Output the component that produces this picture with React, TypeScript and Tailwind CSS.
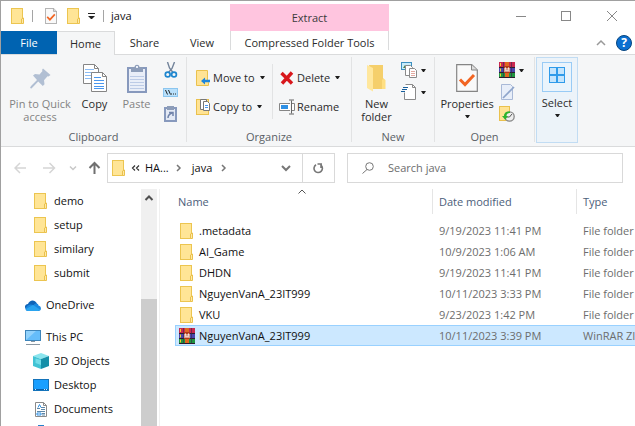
import type { ReactNode } from "react";

function Folder() {
  return (
    <svg width="14" height="16" viewBox="0 0 14 16" className="shrink-0" aria-hidden="true">
      <rect x="0.5" y="0.5" width="11" height="15" fill="#ffe596" stroke="#ecc550" />
      <path d="M10.5 15.5v-4.500l2-1v5.500z" fill="#ffe9a6" stroke="#eac14d" />
    </svg>
  );
}

function WinRar() {
  return (
    <svg width="16" height="16" viewBox="0 0 16 16" className="shrink-0" aria-hidden="true">
      <rect width="16" height="5" fill="#c9284f" />
      <rect y="5" width="16" height="6" fill="#4a47ae" />
      <rect y="10" width="16" height="6" fill="#1f9440" />
      <path d="M0 5.500h16M0 10.500h16M0 15.500h16" stroke="#2a1c2e" />
      <path d="M1.500 1v3M1.500 6.500v3M1.500 11.500v3" stroke="#f5d02f" />
      <path d="M4.500 0v15.500M12.500 0v15.500" stroke="#3c2748" strokeOpacity="0.6" />
      <rect x="6" width="4" height="15" fill="#e0681f" />
      <rect x="5" y="4" width="6" height="7" fill="#b13a1c" />
      <path d="M6 10V6h1v3h2V6h1v4" stroke="#fff" fill="none" />
    </svg>
  );
}

function Caret() {
  return (
    <svg width="5" height="3" viewBox="0 0 5 3" className="shrink-0" aria-hidden="true">
      <path d="M0 0h5L3 3H2z" fill="#1e1e1e" />
    </svg>
  );
}

function CheckPage({ width, height }: { width: number; height: number }) {
  return (
    <svg width={width} height={height} viewBox="0 0 22 28" preserveAspectRatio="none" aria-hidden="true">
      <path d="M.7.7h15L21.300 6v21.300H.7z" fill="#f9f9f9" stroke="#858585" strokeWidth="1.200" />
      <path d="M15.500.7V6h5.800" fill="#ddd" stroke="#858585" />
      <path d="M4 15.500l5 5 9-9.500" fill="none" stroke="#f26522" strokeWidth="3" />
    </svg>
  );
}

function Pin() {
  return (
    <svg width="21" height="21" viewBox="0 0 21 21" aria-hidden="true">
      <path d="M13 .5l7.500 6.500-2 1.500-1-.3-3.500 4 .5 4-1.700 1.800-4.600-4.400L1.500 20.500 0 20l1-2 6-6L3 7.500 5 6l4.500.5 3-3.500-.5-1z" fill="#b1bfd3" />
    </svg>
  );
}

function CopyPages() {
  return (
    <svg width="24" height="28" viewBox="0 0 24 28" aria-hidden="true">
      <path d="M.5.5h11l4 4v15H.5z" fill="#fff" stroke="#858585" />
      <path d="M11.500.5v4h4" fill="none" stroke="#858585" />
      <path d="M2 5.500h9M2 8.500h9M2 11.500h9M2 14.500h9" stroke="#8bbcf5" />
      <path d="M8.500 8.500h11l4 4v15h-15z" fill="#fff" stroke="#858585" />
      <path d="M19.500 8.500v4h4" fill="none" stroke="#858585" />
      <path d="M11 13.500h7M11 16.500h10M11 19.500h10M11 22.500h10M11 24.500h10" stroke="#4a97ee" />
    </svg>
  );
}

function Clipboard() {
  return (
    <svg width="20" height="29" viewBox="0 0 20 29" aria-hidden="true">
      <rect x="1" y="4" width="18" height="24" fill="#e9eef8" stroke="#8799bd" strokeWidth="2" />
      <path d="M3 12.500h14M3 15.500h14M3 18.500h14M3 21.500h14M3 24.500h14" stroke="#bccbe6" />
      <path d="M4 8V3h3.500C8 0 12 0 12.500 3H16v5z" fill="#8d9db9" />
      <rect x="9" y="2" width="2" height="2" fill="#e9eef8" />
    </svg>
  );
}

function Scissors() {
  return (
    <svg width="16" height="16" viewBox="0 0 16 16" aria-hidden="true">
      <path d="M4.500 0l2 6L10 10.500M11.500 0L9 6.500 5.500 10.500" fill="none" stroke="#72839a" strokeWidth="1.400" />
      <circle cx="4.700" cy="12.500" r="2.400" fill="none" stroke="#1e86cf" strokeWidth="1.700" />
      <circle cx="11" cy="12.500" r="2.400" fill="none" stroke="#1e86cf" strokeWidth="1.700" />
    </svg>
  );
}

function CopyPath() {
  return (
    <svg width="16" height="16" viewBox="0 0 16 16" aria-hidden="true">
      <rect x=".5" y="4.500" width="14" height="8" fill="#b9e0fb" stroke="#8cc6ef" />
      <path d="M2.500 6l2 4.500M5.500 6l2 4.500" stroke="#222" />
      <path d="M8 10h1M10 10h1M12 10h1" stroke="#222" />
    </svg>
  );
}

function PasteShortcut() {
  return (
    <svg width="16" height="16" viewBox="0 0 16 16" aria-hidden="true">
      <rect x="2" y="2" width="11" height="13" fill="#e3e9f5" stroke="#8799bd" strokeWidth="2" />
      <rect x="4" width="7" height="4" fill="#8d9db9" />
      <path d="M5 12c0-3 1-4 4-5M6 6.500h4V10" fill="none" stroke="#7083aa" strokeWidth="1.500" />
    </svg>
  );
}

function MoveTo() {
  return (
    <svg width="14" height="16" viewBox="0 0 14 16" aria-hidden="true">
      <path d="M.5.5h11v11l1 1v3H.5z" fill="#ffe394" stroke="#eac14d" />
      <path d="M5 11l4-3.500v2.300h5v2.500H9v2.300z" fill="#1e86dc" />
    </svg>
  );
}

function CopyTo() {
  return (
    <svg width="14" height="16" viewBox="0 0 14 16" aria-hidden="true">
      <rect x=".5" y=".5" width="12" height="15" fill="#ffe394" stroke="#eac14d" />
      <path d="M4.500.5h6v10h-6z" fill="#fff" stroke="#777" />
      <path d="M7.500 2.500h4l2 2v7h-6z" fill="#fff" stroke="#777" />
      <path d="M9 6.500h3M9 8.500h3" stroke="#4a97ee" />
    </svg>
  );
}

function DeleteX() {
  return (
    <svg width="14" height="14" viewBox="0 0 14 14" aria-hidden="true">
      <path d="M1.500 2L12 12.500M12 1.500L2 12.500" stroke="#d8171c" strokeWidth="3.400" />
    </svg>
  );
}

function RenameIcon() {
  return (
    <svg width="16" height="16" viewBox="0 0 16 16" aria-hidden="true">
      <path d="M11 4.500H.5v7H11M13 4.500h2.500v7H13" fill="#fff" stroke="#858585" />
      <rect x="2" y="6" width="7" height="4" fill="#2e90e5" />
      <path d="M12.500 1.500v13M10 1h5M10 15h5" stroke="#666" />
    </svg>
  );
}

function BigFolder() {
  return (
    <svg width="20" height="28" viewBox="0 0 20 28" aria-hidden="true">
      <path d="M2 1h14v13l2 2v9H6z" fill="#f5cf6b" />
      <path d="M0 1l6 3v23.500L0 24z" fill="#ffe79d" />
      <path d="M16 15l2.500 1v9H15v-9z" fill="#ffdf82" />
    </svg>
  );
}

function NewItem() {
  return (
    <svg width="16" height="16" viewBox="0 0 16 16" aria-hidden="true">
      <rect x=".5" y=".5" width="10" height="7" fill="#c7ecfb" stroke="#3b8fc0" />
      <path d="M2 6l2-3 3 3z" fill="#478450" />
      <path d="M4.500 3.500h5l2 2v8h-7z" fill="#fff" stroke="#8a8a8a" />
      <path d="M8.500 6.500h5l2 2v7h-7z" fill="#fff" stroke="#8a8a8a" />
      <path d="M10 9.500h4M10 11.500h4M10 13.500h4" stroke="#e3a9a0" />
    </svg>
  );
}

function EasyAccess() {
  return (
    <svg width="16" height="16" viewBox="0 0 16 16" aria-hidden="true">
      <path d="M4.500.5h7l3 3v12h-11v-7" fill="#fff" stroke="#8a8a8a" />
      <path d="M11.500.5v3h3" fill="none" stroke="#8a8a8a" />
      <path d="M2 3.500h5M1 5.500h5M0 7.500h4" stroke="#175f9d" />
    </svg>
  );
}

function EditPage() {
  return (
    <svg width="16" height="16" viewBox="0 0 16 16" aria-hidden="true">
      <path d="M2.500.5h9l2 2v13h-11z" fill="#e8eef9" stroke="#a9b9d7" />
      <path d="M4 14L15 3" stroke="#8ea4cb" strokeWidth="1.700" />
    </svg>
  );
}

function HistoryIcon() {
  return (
    <svg width="16" height="16" viewBox="0 0 16 16" aria-hidden="true">
      <rect x=".5" y=".5" width="10" height="14" fill="#ffe394" stroke="#eac14d" />
      <circle cx="10.500" cy="10.500" r="4.700" fill="#eee" stroke="#888" strokeWidth="1.300" />
      <path d="M13 8l-2.500 3H8" fill="none" stroke="#555" />
      <path d="M11 5.500C7 5 5 7 5 10H3l3.300 3.700L9 10H7.500c0-2 1-3 3.500-3z" fill="#2db52d" />
    </svg>
  );
}

function OneDrive() {
  return (
    <svg width="16" height="11" viewBox="0 0 16 11" aria-hidden="true">
      <path d="M3 4C4.500 0 9.500-1 12 3.500L8 8 1 9C-1 7 0 4.500 3 4z" fill="#0f64b8" />
      <path d="M8.500 5c2-2.500 5-1.500 5 .5C16.500 6 17 10.500 13.500 11H3C.5 11 0 9 1 7.500c2-3.500 5-3.500 7.500-2.500z" fill="#1b88df" />
      <path d="M1 9l7-4 7 4.500c-1 1.500-2 1.500-3 1.500H3C2 11 1.200 10 1 9z" fill="#2aa4ef" />
    </svg>
  );
}

function Pc() {
  return (
    <svg width="16" height="16" viewBox="0 0 16 16" aria-hidden="true">
      <rect x=".5" y="1.500" width="15" height="10" fill="#65bdfa" stroke="#3e85ba" />
      <path d="M1 11V2h10z" fill="#92d2fc" />
      <path d="M6 12.500h4M1 15.500h14" stroke="#8997a3" />
    </svg>
  );
}

function Cube() {
  return (
    <svg width="16" height="16" viewBox="0 0 16 16" aria-hidden="true">
      <path d="M0 3l8-3 8 3-8 3z" fill="#8be5ee" />
      <path d="M0 3l8 3v10l-8-3z" fill="#41c3d4" />
      <path d="M16 3L8 6v10l8-3z" fill="#158fa8" />
      <path d="M2.500 5.500L8 7v5l-5.500-2z" fill="#72dce8" />
    </svg>
  );
}

function DesktopIcon() {
  return (
    <svg width="16" height="12" viewBox="0 0 16 12" aria-hidden="true">
      <rect x=".5" y=".5" width="15" height="11" fill="#1a9fff" stroke="#1473ba" />
      <path d="M1 10.500h14" stroke="#0c5fa8" />
      <path d="M2 10.500h1M11 10.500h1M13 10.500h1" stroke="#d3ecff" />
    </svg>
  );
}

function DocumentIcon() {
  return (
    <svg width="12" height="15" viewBox="0 0 12 15" aria-hidden="true">
      <path d="M.5.5h8l3 3v11H.5z" fill="#fff" stroke="#8a8a8a" />
      <path d="M8.500.5v3h3" fill="none" stroke="#8a8a8a" />
      <path d="M2 6.500h3M6 5.500h4M6 7.500h4M2 9.500h8M7 11.500h3M7 13h3" stroke="#5e87a8" />
      <path d="M3 5.500l1.500-3L6 5.500M2 11h4v2H2z" stroke="#3292e4" fill="none" />
    </svg>
  );
}

function Chevron({ d, color, w = 1 }: { d: string; color: string; w?: number }) {
  return (
    <svg width="10" height="10" viewBox="0 0 10 10" className="shrink-0" aria-hidden="true">
      <path d={d} fill="none" stroke={color} strokeWidth={w} />
    </svg>
  );
}

function Arrow({ kind, color }: { kind: "left" | "right" | "up"; color: string }) {
  const d = {
    left: "M12 7H1.500M6 2L1 7l5 5",
    right: "M0 7h11M6.500 2l5 5-5 5",
    up: "M6.500 13V2M1.500 7l5-5 5 5",
  }[kind];
  return (
    <svg width="13" height="14" viewBox="0 0 13 14" aria-hidden="true">
      <path d={d} fill="none" stroke={color} strokeWidth={kind === "up" ? 2 : 1.500} />
    </svg>
  );
}

function Divider() {
  return <span className="block h-3 w-px bg-[#a5a5a5]" />;
}

function Group({ label, className, children }: { label: string; className: string; children: ReactNode }) {
  return (
    <section aria-label={label} className={`flex shrink-0 flex-col ${className}`}>
      <div className="flex h-[72px] items-start">{children}</div>
      <h2 className="text-center text-[#5a5f66]">{label}</h2>
    </section>
  );
}

function BigButton({ icon, className, children }: { icon: ReactNode; className: string; children: ReactNode }) {
  return (
    <button className={`flex shrink-0 flex-col items-center pt-[5px] leading-[13px] ${className}`}>
      <span className="mb-[3px] flex h-8 items-center justify-center">{icon}</span>
      {children}
    </button>
  );
}

function SmallButton({ icon, label, caret = false }: { icon: ReactNode; label: string; caret?: boolean }) {
  return (
    <button aria-label={label} className="flex h-[22px] items-center gap-1">
      {icon}
      {caret && <Caret />}
    </button>
  );
}

function RowButton({ icon, caret = false, children }: { icon: ReactNode; caret?: boolean; children: ReactNode }) {
  return (
    <button className="flex h-[29px] items-center whitespace-nowrap">
      <span className="mr-0.5 flex w-4 justify-center">{icon}</span>
      {children}
      {caret && <span className="ml-[5px]"><Caret /></span>}
    </button>
  );
}

const files = [
  { name: ".metadata", date: "9/19/2023 11:41 PM", type: "File folder" },
  { name: "AI_Game", date: "10/9/2023 1:06 AM", type: "File folder" },
  { name: "DHDN", date: "9/19/2023 11:41 PM", type: "File folder" },
  { name: "NguyenVanA_23IT999", date: "10/11/2023 3:33 PM", type: "File folder" },
  { name: "VKU", date: "9/23/2023 1:42 PM", type: "File folder" },
  { name: "NguyenVanA_23IT999", date: "10/11/2023 3:39 PM", type: "WinRAR ZIP archive", selected: true },
];

function NavItem({ icon, className = "pl-8", children }: { icon: ReactNode; className?: string; children: ReactNode }) {
  return (
    <li className={className}>
      <a href="#" className="flex h-6 items-center gap-[5px] whitespace-nowrap">
        <span className="flex w-4 shrink-0 justify-center">{icon}</span>
        {children}
      </a>
    </li>
  );
}

export default function App() {
  return (
    <div className="flex h-screen flex-col overflow-hidden border-t border-l border-[#a0a0a0] bg-white font-['Open_Sans','Noto_Sans',sans-serif] text-[11px] leading-4 text-[#111]">
      <header className="flex h-[30px] shrink-0">
        <div className="flex w-[229px] shrink-0 items-center pl-2.5">
          <Folder />
          <span className="ml-[7px]"><Divider /></span>
          <button aria-label="Properties" className="ml-3"><CheckPage width={12} height={16} /></button>
          <button aria-label="New folder" className="ml-2.5"><Folder /></button>
          <button aria-label="Customize toolbar" className="ml-[7px]">
            <svg width="7" height="6" viewBox="0 0 7 6" aria-hidden="true"><path d="M0 .5h7" stroke="#222" /><path d="M0 3h7L4 6H3z" fill="#222" /></svg>
          </button>
          <span className="ml-2"><Divider /></span>
          <h1 className="ml-[7px]">java</h1>
        </div>
        <div className="mt-[3px] flex w-[159px] shrink-0 items-center justify-center bg-[#ffc5df] text-[#3b3b3b]">Extract</div>
        <div className="ml-auto flex">
          <button aria-label="Minimize" className="flex w-[45px] items-center justify-center">
            <span className="h-px w-2.5 bg-[#888]" />
          </button>
          <button aria-label="Maximize" className="flex w-[45px] items-center justify-center">
            <span className="size-2.5 border border-[#888]" />
          </button>
          <button aria-label="Close" className="flex w-[47px] items-center justify-center">
            <Chevron d="M0 0l10 10M10 0L0 10" color="#888" />
          </button>
        </div>
      </header>

      <div className="flex h-6 shrink-0 border-b border-[#dadbdc] text-[#2b2b2b]">
        <div className="flex w-[229px] shrink-0" role="tablist">
          <button role="tab" className="w-14 bg-[#0063b1] text-white">File</button>
          <button role="tab" aria-selected="true" className="-mb-px w-[58px] border-t border-r border-[#dadbdc] bg-[#f5f6f7]">Home</button>
          <button role="tab" className="w-[59px]">Share</button>
          <button role="tab" className="w-14">View</button>
        </div>
        <button role="tab" className="mb-1 w-[159px] shrink-0 border-x border-[#dadbdc] pt-1 whitespace-nowrap">Compressed Folder Tools</button>
        <div className="ml-auto flex items-center gap-2.5 pr-[3px]">
          <button aria-label="Collapse ribbon"><Chevron d="M1 7l4-4 4 4" color="#999" w={1.5} /></button>
          <button aria-label="Help" className="size-4 rounded-full border border-[#07457f] bg-[#0b6fd0] text-xs leading-[14px] font-bold text-white">?</button>
        </div>
      </div>

      <div className="flex h-[92px] shrink-0 border-b border-[#dadbdc] bg-[#f5f6f7] pt-[2px] text-[#2b2b2b]">
        <Group label="Clipboard" className="w-[185px]">
          <BigButton className="w-[78px] text-[#838383]" icon={<Pin />}>Pin to Quick<br />access</BigButton>
          <BigButton className="w-[31px]" icon={<CopyPages />}>Copy</BigButton>
          <BigButton className="w-[53px] text-[#838383]" icon={<Clipboard />}>Paste</BigButton>
          <div className="flex flex-col pt-[2px]">
            <SmallButton label="Cut" icon={<Scissors />} />
            <SmallButton label="Copy path" icon={<CopyPath />} />
            <SmallButton label="Paste shortcut" icon={<PasteShortcut />} />
          </div>
        </Group>
        <div className="mb-1 w-px bg-[#e2e3e4]" />
        <Group label="Organize" className="w-[164px]">
          <div className="w-[85px] shrink-0 pt-1.5 pl-2">
            <RowButton icon={<MoveTo />} caret>Move to</RowButton>
            <RowButton icon={<CopyTo />} caret>Copy to</RowButton>
          </div>
          <div className="mt-[7px] h-[55px] w-px shrink-0 bg-[#e2e3e4]" />
          <div className="shrink-0 pt-1.5 pl-1.5">
            <RowButton icon={<DeleteX />} caret>Delete</RowButton>
            <RowButton icon={<RenameIcon />}>Rename</RowButton>
          </div>
        </Group>
        <div className="mb-1 w-px bg-[#e2e3e4]" />
        <Group label="New" className="w-[82px]">
          <BigButton className="w-[49px]" icon={<BigFolder />}>New<br />folder</BigButton>
          <div className="flex flex-col pt-[2px]">
            <SmallButton label="New item" icon={<NewItem />} caret />
            <SmallButton label="Easy access" icon={<EasyAccess />} caret />
          </div>
        </Group>
        <div className="mb-1 w-px bg-[#e2e3e4]" />
        <Group label="Open" className="w-[99px]">
          <BigButton className="w-[64px]" icon={<CheckPage width={22} height={28} />}>
            Properties
            <span className="mt-[5px]"><Caret /></span>
          </BigButton>
          <div className="flex flex-col pt-[2px]">
            <SmallButton label="Open with WinRAR" icon={<WinRar />} caret />
            <SmallButton label="Edit" icon={<EditPage />} />
            <SmallButton label="History" icon={<HistoryIcon />} />
          </div>
        </Group>
        <div className="mb-1 w-px bg-[#e2e3e4]" />
        <button className="mb-[3px] ml-px flex w-[42px] shrink-0 flex-col items-center border border-[#c1dcf3] bg-[#ecf3f9] pt-1 leading-[13px]">
          <span className="mb-1 flex size-[30px] items-center justify-center border border-[#99cbf5] bg-[#eaf4fc] pb-1">
            <svg width="16" height="16" viewBox="0 0 16 16" aria-hidden="true">
              <rect x=".5" y=".5" width="15" height="15" fill="#c4e5fd" stroke="#2f9bea" />
              <path d="M8 0v16M0 8h16" stroke="#2f9bea" strokeWidth="2" />
            </svg>
          </span>
          Select
          <span className="mt-[5px]"><Caret /></span>
        </button>
      </div>

      <div className="flex h-[42px] shrink-0 items-center pr-3">
        <div className="flex w-[106px] shrink-0 items-center pl-[13px]">
          <button aria-label="Back"><Arrow kind="left" color="#d5d5d5" /></button>
          <button aria-label="Forward" className="ml-4"><Arrow kind="right" color="#d5d5d5" /></button>
          <button aria-label="Recent" className="ml-3"><Chevron d="M2 3.500l3 3 3-3" color="#c8c8c8" w={1.5} /></button>
          <button aria-label="Up" className="ml-2.5"><Arrow kind="up" color="#707070" /></button>
        </div>
        <nav aria-label="Address" className="flex h-[30px] min-w-0 flex-[222] items-center border border-[#d9d9d9] pl-1">
          <Folder />
          <button aria-label="Parents" className="ml-[5px]">
            <svg width="9" height="6" viewBox="0 0 9 6" aria-hidden="true"><path d="M4 .5L1.500 3 4 5.500M8 .5L5.500 3 8 5.500" fill="none" stroke="#333" strokeWidth="1.200" /></svg>
          </button>
          <a href="#" className="ml-[5px]">HA...</a>
          <span className="ml-[5px]"><Chevron d="M3 2l3 3-3 3" color="#777" w={1.5} /></span>
          <a href="#" className="ml-2">java</a>
          <span className="ml-[7px]"><Chevron d="M3 2l3 3-3 3" color="#777" w={1.5} /></span>
          <button aria-label="Previous locations" className="mr-[11px] ml-auto"><Chevron d="M1 3l4 4 4-4" color="#777" w={2} /></button>
          <button aria-label="Refresh" className="flex w-8 items-center justify-center self-stretch border-l border-[#d9d9d9]">
            <svg width="11" height="12" viewBox="0 0 11 12" aria-hidden="true">
              <path d="M3 2.800a4.200 4.200 0 1 0 5 .4M8 6V2M4.500 2H9" fill="none" stroke="#777" strokeWidth="1.600" />
            </svg>
          </button>
        </nav>
        <label className="ml-3 flex h-[30px] min-w-0 flex-[260] items-center gap-3.5 border border-[#d9d9d9] pl-3.5 text-[#6d6d6d]">
          <svg width="12" height="12" viewBox="0 0 12 12" className="shrink-0" aria-hidden="true">
            <circle cx="7.500" cy="4.500" r="3.800" fill="none" stroke="#777" />
            <path d="M5 7.500L.5 11.500" stroke="#777" />
          </svg>
          <input type="search" aria-label="Search java" placeholder="Search java" className="min-w-0 flex-1 bg-transparent outline-none placeholder:text-[#6d6d6d]" />
        </label>
      </div>

      <div className="flex min-h-0 flex-1">
        <nav aria-label="Folders" className="w-[140px] shrink-0 overflow-hidden">
          <ul>
            {["demo", "setup", "similary", "submit"].map((name) => (
              <NavItem key={name} icon={<Folder />}>{name}</NavItem>
            ))}
            <NavItem className="mt-2 pl-6" icon={<OneDrive />}>OneDrive</NavItem>
            <NavItem className="mt-2 pl-6" icon={<Pc />}>This PC</NavItem>
            <NavItem icon={<Cube />}>3D Objects</NavItem>
            <NavItem icon={<DesktopIcon />}>Desktop</NavItem>
            <NavItem icon={<DocumentIcon />}>Documents</NavItem>
            <NavItem icon={<svg width="16" height="16" viewBox="0 0 16 16" aria-hidden="true"><path d="M5 0h6v7h4l-7 8-7-8h4z" fill="#2382cc" /></svg>}>Downloads</NavItem>
          </ul>
        </nav>
        <div className="flex w-4 shrink-0 flex-col bg-[#f0f0f0]">
          <button aria-label="Scroll up" className="flex h-[110px] items-start justify-center pt-1"><Chevron d="M1.500 7L5 3.500 8.500 7" color="#505050" w={2} /></button>
          <div className="flex-1 bg-[#cdcdcd]" />
        </div>
        <div className="ml-0.5 w-px shrink-0 bg-[#f0f0f0]" />
        <main className="min-w-0 flex-1 overflow-hidden pl-[15px]">
          <table className="w-full min-w-[560px] table-fixed border-separate border-spacing-0 text-left whitespace-nowrap">
            <colgroup>
              <col className="w-[257px]" />
              <col className="w-36" />
              <col />
            </colgroup>
            <thead>
              <tr className="h-[25px] text-[#4c607a]">
                <th className="p-0 pl-[3px] font-normal">
                  <div className="flex h-[25px]">
                    <span className="w-[119px] shrink-0 pt-[5px]">Name</span>
                    <Chevron d="M1.500 4.500L5 1l3.500 3.500" color="#555" />
                  </div>
                </th>
                <th className="border-l border-[#e5e5e5] p-0 pl-1.5 font-normal">Date modified</th>
                <th className="border-l border-[#e5e5e5] p-0 pl-1.5 font-normal">Type</th>
              </tr>
            </thead>
            <tbody className="before:block before:h-1.5">
              {files.map((f) => {
                const edge = f.selected ? "border-y border-[#99d1ff] bg-[#cce8ff]" : "";
                return (
                  <tr key={f.name + f.date} className="h-[21px] text-[#6d6d6d]">
                    <td className={`p-0 text-[#111] ${edge} ${f.selected ? "border-l pl-[3px]" : "pl-1"}`}>
                      <div className="flex items-center gap-1">
                        <span className="flex w-4 justify-center">{f.selected ? <WinRar /> : <Folder />}</span>
                        {f.name}
                      </div>
                    </td>
                    <td className={`p-0 pl-[7px] ${edge}`}>{f.date}</td>
                    <td className={`p-0 pl-[7px] ${edge}`}>{f.type}</td>
                  </tr>
                );
              })}
            </tbody>
          </table>
        </main>
      </div>
    </div>
  );
}
